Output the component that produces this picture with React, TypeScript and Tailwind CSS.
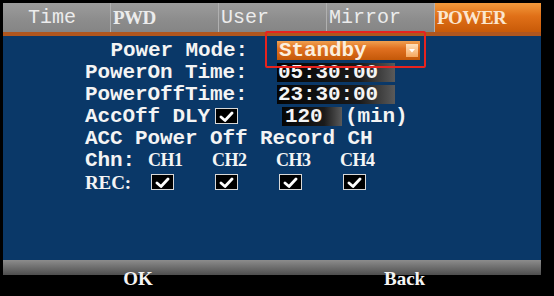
import React from "react";

const mono = { fontFamily: '"Liberation Mono", "Courier New", monospace' };
const serif = { fontFamily: '"Liberation Serif", "Times New Roman", serif' };

function Check({ className = "" }: { className?: string }) {
  return (
    <div className={`w-[23px] h-[16px] bg-black border border-[#d8d8d8] flex items-center justify-center ${className}`}>
      <svg width="15" height="11" viewBox="0 0 15 11">
        <path d="M2 6 L6 9.5 L13 2" stroke="#ffffff" strokeWidth="2.8" fill="none" strokeLinecap="round" strokeLinejoin="round" />
      </svg>
    </div>
  );
}

function TimeBox({ v }: { v: string }) {
  return (
    <div className="w-[118px] h-[19px] bg-[linear-gradient(to_right,#050505_0%,#1a1a1a_70%,#5a5a5a_100%)] flex items-center pl-[1px] text-[#f4f4f4] text-[21px] font-bold tracking-[-0.1px] leading-none" style={mono}>
      {v}
    </div>
  );
}

export default function App() {
  const tabs = [
    { t: "Time", pl: "pl-[25px]", f: mono, active: false },
    { t: "PWD", pl: "pl-[2px]", f: serif, active: false },
    { t: "User", pl: "pl-[2px]", f: mono, active: false },
    { t: "Mirror", pl: "pl-[2px]", f: mono, active: false },
    { t: "POWER", pl: "pl-[2px]", f: serif, active: true },
  ];
  return (
    <div className="w-[554px] h-[296px] bg-black overflow-hidden flex flex-col pt-[3px]">
      <div className="ml-[3px] w-[538px] flex flex-col h-[257px]">
        {/* tabs */}
        <div className="flex h-[29px]">
          {tabs.map((tab, i) => (
            <div
              key={tab.t}
              className={`${i === 4 ? "w-[106px]" : "w-[108px]"} h-full flex items-center ${tab.pl} ${
                tab.active
                  ? "bg-[linear-gradient(to_bottom,#f39a3c_0%,#e07018_45%,#c85a08_100%)] text-[#fbe6cf]"
                  : "bg-[linear-gradient(to_bottom,#9c9c9c_0%,#8c8c8c_60%,#858585_100%)] text-[#ececec] border-r border-[#b0b0b0]"
              }`}
            >
              <span
                className={`leading-none ${tab.f === serif ? "text-[19px] font-bold tracking-[-0.5px]" : "text-[20px] tracking-[0px]"}`}
                style={tab.f}
              >
                {tab.t}
              </span>
            </div>
          ))}
        </div>
        <div className="h-[4px] bg-[#b0561e]" />
        {/* body */}
        <div className="flex-1 bg-[#0a3868] pt-[3px] pl-[82px] text-[#f4f4f4] text-[21px] font-bold tracking-[-0.1px] leading-none" style={mono}>
          {/* Power Mode */}
          <div className="h-[22px] flex items-center relative">
            <div className="w-[163px] text-right whitespace-pre">Power Mode:</div>
            <div className="ml-[29px] w-[143px] h-[19px] bg-[linear-gradient(to_bottom,#f0a050_0%,#e07020_40%,#c45808_100%)] flex items-center pl-[2px] text-[#fbeedd]">
              <span className="flex-1">Standby</span>
              <div className="w-[12px] h-[13px] mr-[2px] bg-[linear-gradient(to_bottom,#ffe0bc,#f5a860)] flex items-center justify-center">
                <svg width="8" height="8" viewBox="0 0 8 8">
                  <path d="M1 3 L4 6.5 L7 3 Z" fill="#ffffff" />
                </svg>
              </div>
            </div>
            <div className="absolute left-[180px] top-[-8px] w-[161px] h-[37px] border-2 border-[#e8231e] rounded-[2px] pointer-events-none z-10" />
          </div>
          <div className="h-[22px] flex items-center">
            <div className="w-[163px] whitespace-pre">PowerOn Time:</div>
            <div className="ml-[29px]"><TimeBox v="05:30:00" /></div>
          </div>
          <div className="h-[22px] flex items-center">
            <div className="w-[163px] whitespace-pre">PowerOffTime:</div>
            <div className="ml-[29px]"><TimeBox v="23:30:00" /></div>
          </div>
          <div className="h-[22px] flex items-center">
            <div className="w-[125px] whitespace-pre">AccOff DLY</div>
            <Check className="ml-[5px]" />
            <div className="ml-[44px] w-[60px] h-[19px] bg-[linear-gradient(to_right,#050505_0%,#1a1a1a_70%,#5a5a5a_100%)] flex items-center pl-[3px]">120</div>
            <div className="ml-[3px] whitespace-pre">(min)</div>
          </div>
          <div className="h-[22px] flex items-center whitespace-pre">ACC Power Off Record CH</div>
          <div className="h-[22px] flex items-center">
            <div className="w-[63px] whitespace-pre">Chn:</div>
            {["CH1", "CH2", "CH3", "CH4"].map((c) => (
              <div key={c} className="w-[64px] text-[18px] font-bold tracking-[-0.5px]" style={serif}>
                {c}
              </div>
            ))}
          </div>
          <div className="h-[22px] flex items-center">
            <div className="w-[66px] text-[19px] font-bold" style={serif}>REC:</div>
            {[0, 1, 2, 3].map((i) => (
              <div key={i} className="w-[64px]">
                <Check />
              </div>
            ))}
          </div>
        </div>
      </div>
      {/* footer */}
      <div className="h-[36px] ml-[3px] w-[538px] bg-[linear-gradient(to_bottom,#8c8c8c_0px,#4e4e4e_15px,#000_15px)] flex items-center text-[#f4f4f4] text-[19px] font-bold leading-none" style={serif}>
        <div className="ml-[120px] w-[30px] text-center">OK</div>
        <div className="ml-[231px]">Back</div>
      </div>
    </div>
  );
}
